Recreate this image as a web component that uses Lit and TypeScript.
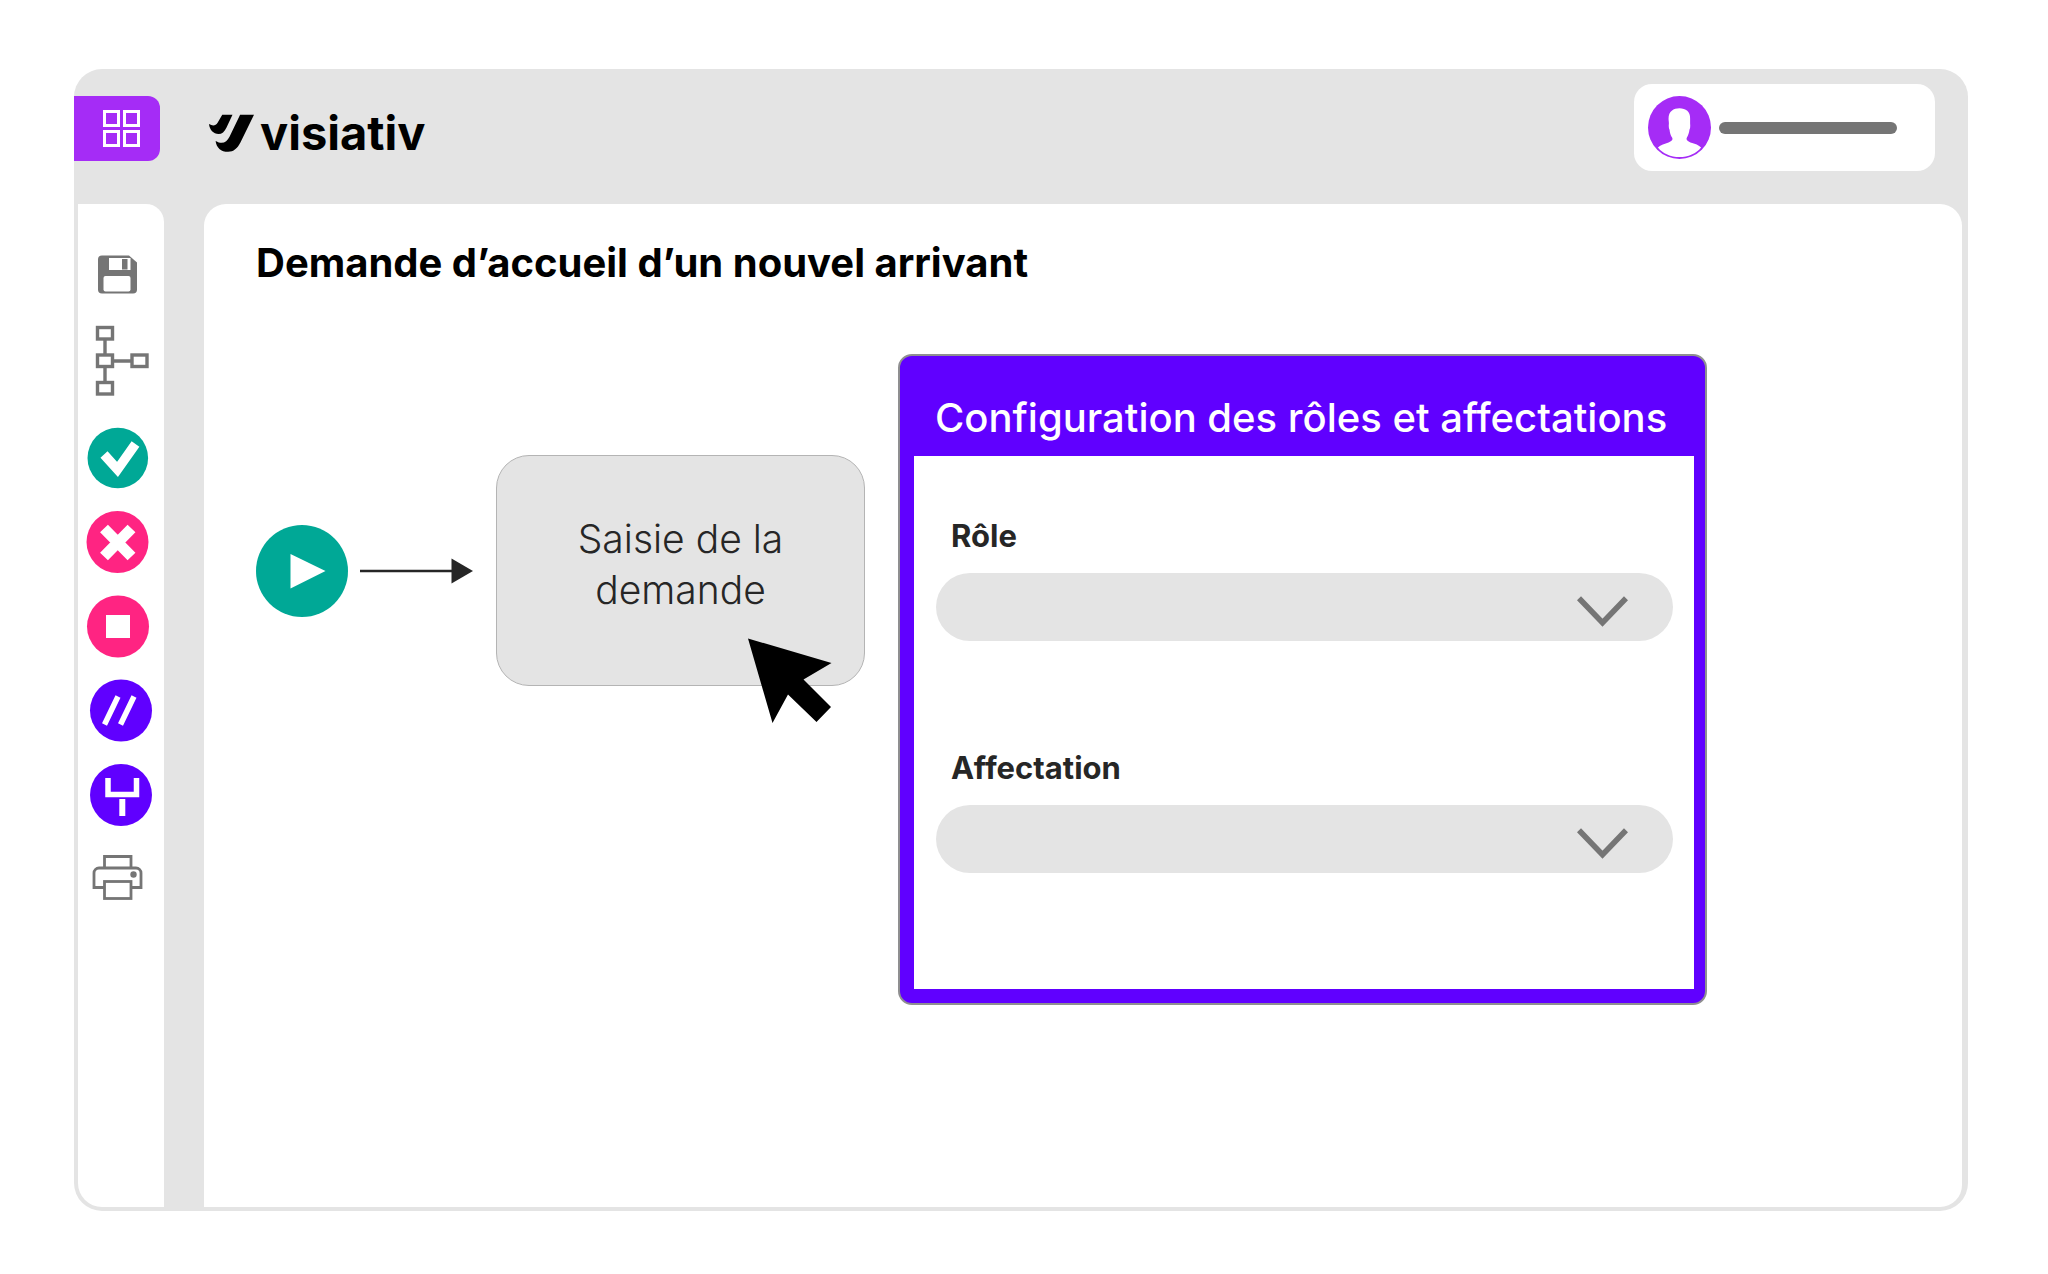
import { LitElement, html, css, svg } from "lit";
import { customElement, property } from "lit/decorators.js";

const TEAL = "#00a896";
const PINK = "#ff2482";
const INDIGO = "#6000ff";
const GREY = "#757575";

/* Every tool glyph is drawn on an 86 x 84 board, the size of a tool button. */
const tools = [
  {
    label: "Enregistrer",
    glyph: svg`
      <path fill=${GREY} fill-rule="evenodd" d="M24 22.500h27l8 7v27a4 4 0 0 1-4 4H24a4 4 0 0 1-4-4v-30a4 4 0 0 1 4-4z"/>
      <rect x="31" y="25" width="21.500" height="12" fill="#fff"/>
      <rect x="44" y="26" width="5.500" height="10.500" fill=${GREY}/>
      <rect x="25.500" y="43" width="27" height="15.500" rx="2" fill="#fff"/>`,
  },
  {
    label: "Organigramme",
    glyph: svg`
      <g fill="none" stroke=${GREY} stroke-width="3.400">
        <rect x="19.500" y="8.500" width="15" height="11.500"/>
        <rect x="19.500" y="36" width="15" height="11.500"/>
        <rect x="19.500" y="63.500" width="15" height="11.500"/>
        <rect x="54" y="36" width="15" height="11.500"/>
        <path d="M27 20.500V36M27 48v15.500M34.500 42H54"/>
      </g>`,
  },
  {
    label: "Valider",
    glyph: svg`
      <circle cx="39.800" cy="42" r="30.300" fill=${TEAL}/>
      <path d="M26 38.500l13.500 15 18-25.500" fill="none" stroke="#fff" stroke-width="9.500"/>`,
  },
  {
    label: "Refuser",
    glyph: svg`
      <circle cx="39.500" cy="42" r="31" fill=${PINK}/>
      <path d="M26 28.500l27.500 28M53.500 28.500L26 56.500" stroke="#fff" stroke-width="11"/>`,
  },
  {
    label: "Arrêter",
    glyph: svg`
      <circle cx="40" cy="42.500" r="31" fill=${PINK}/>
      <rect x="28" y="31" width="24" height="23" fill="#fff"/>`,
  },
  {
    label: "Parallèle",
    glyph: svg`
      <circle cx="43" cy="42.500" r="31" fill=${INDIGO}/>
      <path d="M40 28.500L26.500 56.500M56 28.500L42.500 56.500" stroke="#fff" stroke-width="5.500"/>`,
  },
  {
    label: "Embranchement",
    glyph: svg`
      <circle cx="43" cy="43" r="31" fill=${INDIGO}/>
      <path d="M30 26v16.500h28.500V26" fill="none" stroke="#fff" stroke-width="5.500"/>
      <path d="M44.300 47v17" stroke="#fff" stroke-width="6"/>`,
  },
  {
    label: "Imprimer",
    glyph: svg`
      <g fill="none" stroke=${GREY} stroke-width="2.800">
        <path d="M26.500 32V20.500h26.500V32"/>
        <path d="M26.500 51.500H16V37a5 5 0 0 1 5-5h37a5 5 0 0 1 5 5v14.500H53"/>
        <rect x="26.500" y="45.500" width="26.500" height="17"/>
      </g>
      <circle cx="55.500" cy="38.500" r="3.200" fill=${GREY}/>`,
  },
];

@customElement("tool-rail")
class ToolRail extends LitElement {
  static styles = css`
    :host {
      display: block;
      background: #fff;
      border-radius: 0 18px 0 24px;
    }
    .rail {
      display: flex;
      flex-direction: column;
      padding: 29px 0;
    }
    .group {
      display: flex;
      flex-direction: column;
      gap: 2px;
      margin-bottom: 13px;
    }
    .steps {
      gap: 0;
      margin-bottom: 0;
    }
    .tool {
      display: block;
      width: 100%;
      height: 84px;
      padding: 0;
      border: 0;
      background: none;
      cursor: pointer;
    }
    .tool svg {
      display: block;
    }
  `;

  private tool(item: (typeof tools)[number]) {
    return html`<button class="tool" type="button" aria-label=${item.label}>
      <svg width="86" height="84" viewBox="0 0 86 84" aria-hidden="true">${item.glyph}</svg>
    </button>`;
  }

  render() {
    return html`<nav class="rail" aria-label="Outils">
      <div class="group">${tools.slice(0, 2).map((t) => this.tool(t))}</div>
      <div class="group steps">${tools.slice(2).map((t) => this.tool(t))}</div>
    </nav>`;
  }
}

@customElement("select-field")
class SelectField extends LitElement {
  static styles = css`
    :host {
      display: block;
    }
    .label {
      display: block;
      padding-left: 15px;
      font-size: 31px;
      line-height: 36px;
      font-weight: 700;
      color: #262626;
    }
    .box {
      position: relative;
      margin-top: 19px;
    }
    .select {
      display: block;
      width: 100%;
      height: 68px;
      padding: 0 120px 0 32px;
      border: 0;
      border-radius: 34px;
      background: #e4e4e4;
      appearance: none;
      font: inherit;
      font-size: 31px;
      color: #262626;
    }
    .chevron {
      position: absolute;
      top: 23px;
      right: 45px;
      pointer-events: none;
    }
  `;

  @property() label = "";

  render() {
    return html`
      <label class="label" for="field">${this.label}</label>
      <div class="box">
        <select class="select" id="field"><option value=""></option></select>
        <svg class="chevron" width="51" height="31" viewBox="0 0 51 31" aria-hidden="true">
          <path d="M2 2.300l23.500 24.500L49 2.300" fill="none" stroke=${GREY} stroke-width="5.600" />
        </svg>
      </div>
    `;
  }
}

@customElement("app-root")
class AppRoot extends LitElement {
  static styles = css`
    :host {
      display: block;
      font-family: Inter, "Liberation Sans", sans-serif;
      color: #000;
    }
    .page {
      box-sizing: border-box;
      display: flex;
      min-height: 100vh;
      padding: 69px 80px 63px 74px;
      background: #fff;
    }
    .window {
      flex: 1;
      min-width: 0;
      display: flex;
      flex-direction: column;
      border-radius: 28px;
      background: #e4e4e4;
    }
    .header {
      display: flex;
      align-items: center;
      padding: 15px 33px 33px 0;
    }
    .apps {
      display: flex;
      align-items: center;
      margin-top: 2px;
      padding: 14px 20px 14px 29px;
      border: 0;
      border-radius: 0 12px 12px 0;
      background: #a52cf6;
      cursor: pointer;
    }
    .brand {
      display: flex;
      align-items: center;
      gap: 6px;
      margin-left: 49px;
      padding-top: 10px;
      color: #000;
      text-decoration: none;
    }
    .name {
      font-size: 47px;
      line-height: 48px;
      font-weight: 700;
    }
    .user {
      display: flex;
      align-items: center;
      gap: 8px;
      margin-left: auto;
      padding: 12px 38px 12px 14px;
      border: 0;
      border-radius: 18px;
      background: #fff;
      cursor: pointer;
    }
    .line {
      width: 178px;
      height: 12px;
      border-radius: 6px;
      background: #757575;
    }
    .body {
      flex: 1;
      display: grid;
      grid-template-columns: 86px minmax(0, 1fr);
      gap: 40px;
      padding: 0 6px 4px 4px;
    }
    .main {
      padding: 34px 52px;
      border-radius: 22px 22px 22px 0;
      background: #fff;
    }
    .title {
      margin: 0;
      font-size: 40px;
      line-height: 50px;
      font-weight: 700;
    }
    .board {
      display: flex;
      align-items: flex-start;
      gap: 33px;
      margin-top: 66px;
    }
    .flow {
      display: flex;
      align-items: center;
      margin-top: 101px;
    }
    .start {
      padding: 0;
      border: 0;
      background: none;
      cursor: pointer;
    }
    .icon {
      display: block;
      flex: none;
    }
    .arrow {
      margin: 0 23px 0 12px;
    }
    .step {
      position: relative;
      box-sizing: border-box;
      display: flex;
      align-items: center;
      justify-content: center;
      width: 369px;
      height: 231px;
      padding: 0 70px 14px;
      border: 1px solid #b4b4b4;
      border-radius: 33px;
      background: #e4e4e4;
      font-size: 39px;
      line-height: 51px;
      font-weight: 300;
      text-align: center;
      color: #262626;
    }
    .pointer {
      position: absolute;
      left: 251px;
      top: 182px;
    }
    .dialog {
      box-sizing: border-box;
      flex: 0 1 809px;
      border: 2px solid #8f8f90;
      border-radius: 14px;
      padding: 0 11px 14px 14px;
      background: #6000ff;
    }
    .heading {
      margin: 0;
      padding: 38px 0 14px 21px;
      font-size: 40px;
      line-height: 48px;
      font-weight: 500;
      white-space: nowrap;
      color: #fff;
    }
    .fields {
      display: flex;
      flex-direction: column;
      gap: 109px;
      padding: 62px 21px 116px 22px;
      background: #fff;
    }
  `;

  render() {
    return html`
      <div class="page">
        <div class="window">
          <header class="header">
            <button class="apps" type="button" aria-label="Applications">
              <svg class="icon" width="37" height="37" viewBox="0 0 37 37" aria-hidden="true">
                <g fill="none" stroke="#fff" stroke-width="3">
                  <rect x="1.500" y="1.500" width="14" height="14" />
                  <rect x="21.500" y="1.500" width="14" height="14" />
                  <rect x="1.500" y="21.500" width="14" height="14" />
                  <rect x="21.500" y="21.500" width="14" height="14" />
                </g>
              </svg>
            </button>
            <a class="brand" href="#">
              <svg class="icon" width="45" height="38" viewBox="0 0 136 114" aria-hidden="true">
                <path d="M94 2H136L95 86C86 104 74 114 58 114C36 114 22 101 20 81C40 92 53 86 62 68Z" />
                <path d="M40 2H71L53 40C47 53 39 60 29 60C13 60 2 48 0 30C12 37 20 35 26 26Z" />
              </svg>
              <span class="name">visiativ</span>
            </a>
            <button class="user" type="button" aria-label="Compte">
              <svg class="icon" width="63" height="63" viewBox="0 0 190 190" aria-hidden="true">
                <circle cx="95" cy="95" r="95" fill="#a52cf6" />
                <path
                  fill="#fff"
                  d="M95 37C114 37 128 47 127 68C127 74 127 78 127 83C128 92 127 99 125 102C124 112 121 119 117 126C114 133 121 137 128 140C142 144 154 148 160 155C146 173 121 184 95 184C69 184 44 173 30 155C38 147 51 144 62 140C70 136 76 133 73 126C68 119 66 112 65 102C63 98 62 92 63 83C63 78 62 74 62 68C62 46 77 37 95 37Z"
                />
              </svg>
              <span class="line"></span>
            </button>
          </header>

          <div class="body">
            <tool-rail></tool-rail>
            <main class="main">
              <h1 class="title">Demande d’accueil d’un nouvel arrivant</h1>
              <div class="board">
                <div class="flow">
                  <button class="start" type="button" aria-label="Démarrer">
                    <svg class="icon" width="92" height="92" viewBox="0 0 92 92" aria-hidden="true">
                      <circle cx="46" cy="46" r="46" fill=${TEAL} />
                      <path d="M34.500 29L69.500 46L34.500 63.500Z" fill="#fff" />
                    </svg>
                  </button>
                  <svg class="icon arrow" width="113" height="26" viewBox="0 0 113 26" aria-hidden="true">
                    <path d="M0 13H92" stroke="#262626" stroke-width="2.600" />
                    <path d="M91.500 .500L113 13L91.500 25.500Z" fill="#262626" />
                  </svg>
                  <div class="step">
                    <span>Saisie de la demande</span>
                    <svg class="pointer" width="84" height="86" viewBox="0 0 84 86" aria-hidden="true">
                      <path d="M0 .500L83.500 25L55.500 41.500L83 69L68.500 84L40 56.500L24.500 85Z" />
                    </svg>
                  </div>
                </div>

                <section class="dialog" aria-labelledby="heading">
                  <h2 class="heading" id="heading">Configuration des rôles et affectations</h2>
                  <div class="fields">
                    <select-field label="Rôle"></select-field>
                    <select-field label="Affectation"></select-field>
                  </div>
                </section>
              </div>
            </main>
          </div>
        </div>
      </div>
    `;
  }
}
